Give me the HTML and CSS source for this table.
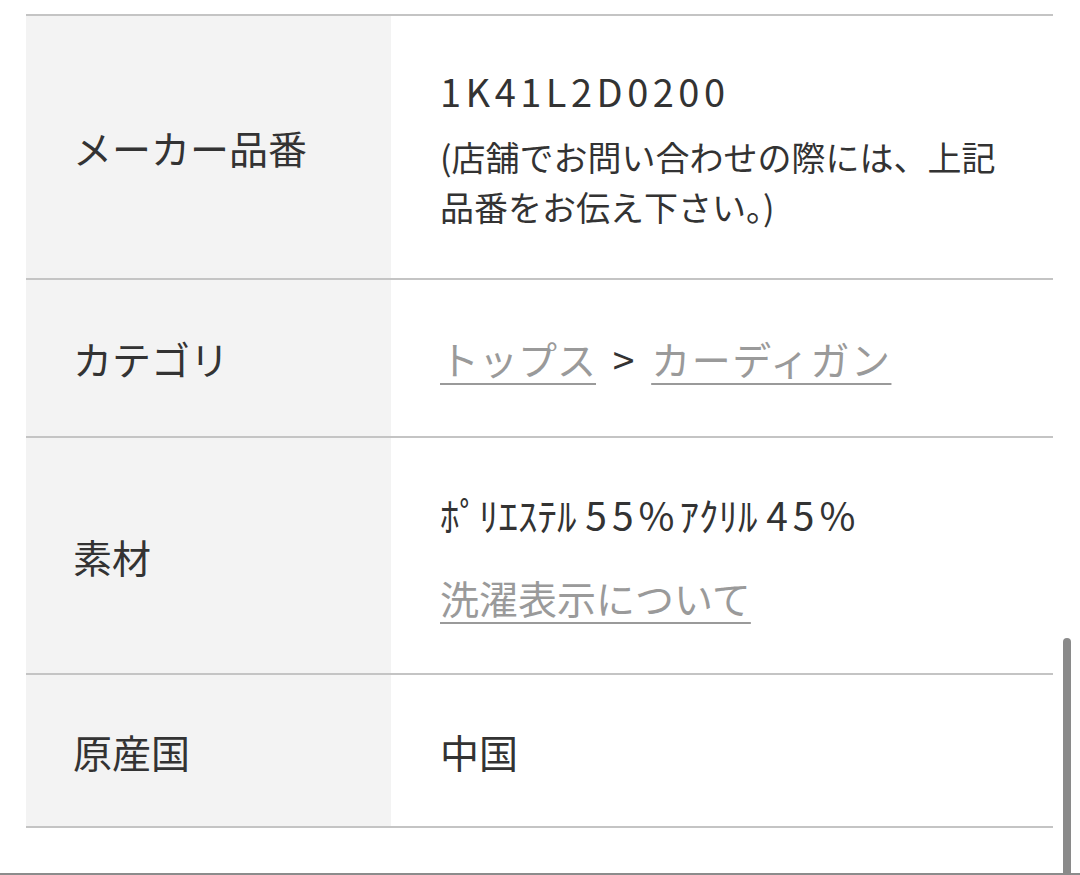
FILE: index.html
```html
<!DOCTYPE html>
<html lang="ja">
<head>
<meta charset="utf-8">
<link rel="stylesheet" href="styles.css">
</head>
<body>
<div class="spec">
  <div class="row">
    <div class="label">メーカー品番</div>
    <div class="value">
      <div class="code">1K41L2D0200</div>
      <div class="note">(店舗でお問い合わせの際には、上記品番をお伝え下さい。)</div>
    </div>
  </div>
  <div class="row row-cat">
    <div class="label">カテゴリ</div>
    <div class="value"><a class="link" href="#">トップス</a> <span class="sep">&gt;</span> <a class="link link-wide" href="#">カーディガン</a></div>
  </div>
  <div class="row row-mat">
    <div class="label">素材</div>
    <div class="value">
      <div class="material">ﾎﾟﾘｴｽﾃﾙ <span class="num">55%</span>ｱｸﾘﾙ <span class="num">45%</span></div>
      <div class="wash"><a class="link" href="#">洗濯表示について</a></div>
    </div>
  </div>
  <div class="row row-origin">
    <div class="label">原産国</div>
    <div class="value">中国</div>
  </div>
</div>
<div class="bottom-edge"></div>
<div class="scrollbar"></div>
</body>
</html>
```

FILE: styles.css
```css
html, body {
  margin: 0;
  padding: 0;
}
body {
  background: #ffffff;
  color: #333333;
  font-family: "Noto Sans CJK JP", "Noto Sans", sans-serif;
  overflow: hidden;
}
.spec {
  margin: 14px 27px 0 26px;
  border-top: 2px solid #c4c4c4;
}
.row {
  display: grid;
  grid-template-columns: 365px 1fr;
  border-bottom: 2px solid #c4c4c4;
}
.label {
  background: #f3f3f3;
  display: flex;
  align-items: center;
  padding-left: 47px;
  font-size: 39px;
  line-height: 50px;
}
.value {
  padding: 50px 40px 46px 49px;
  font-size: 39px;
  line-height: 50px;
}
.code {
  font-size: 38px;
  letter-spacing: 4.5px;
}
.note {
  margin-top: 16px;
  font-size: 34px;
  line-height: 50px;
}
.row-cat .value {
  padding: 53px 40px 53px 49px;
}
.row-mat .value {
  padding: 51px 40px 51px 49px;
}
.row-origin .value {
  padding: 51px 40px 50px 49px;
}
.link {
  color: #9a9a9a;
  text-decoration: underline;
  text-decoration-thickness: 2px;
  text-underline-offset: 8px;
}
.link-wide {
  letter-spacing: 1.5px;
}
.sep {
  color: #333333;
  margin: 0 8px;
}
.material {
  font-size: 39px;
}
.num {
  letter-spacing: 5px;
}
.wash {
  margin-top: 33px;
}
.bottom-edge {
  margin-top: 45px;
  height: 2px;
  background: #8c8c8c;
}
.scrollbar {
  position: fixed;
  right: 9px;
  top: 638px;
  bottom: 0;
  width: 8px;
  background: #8a8a8a;
  border-radius: 4px 4px 0 0;
}
```
